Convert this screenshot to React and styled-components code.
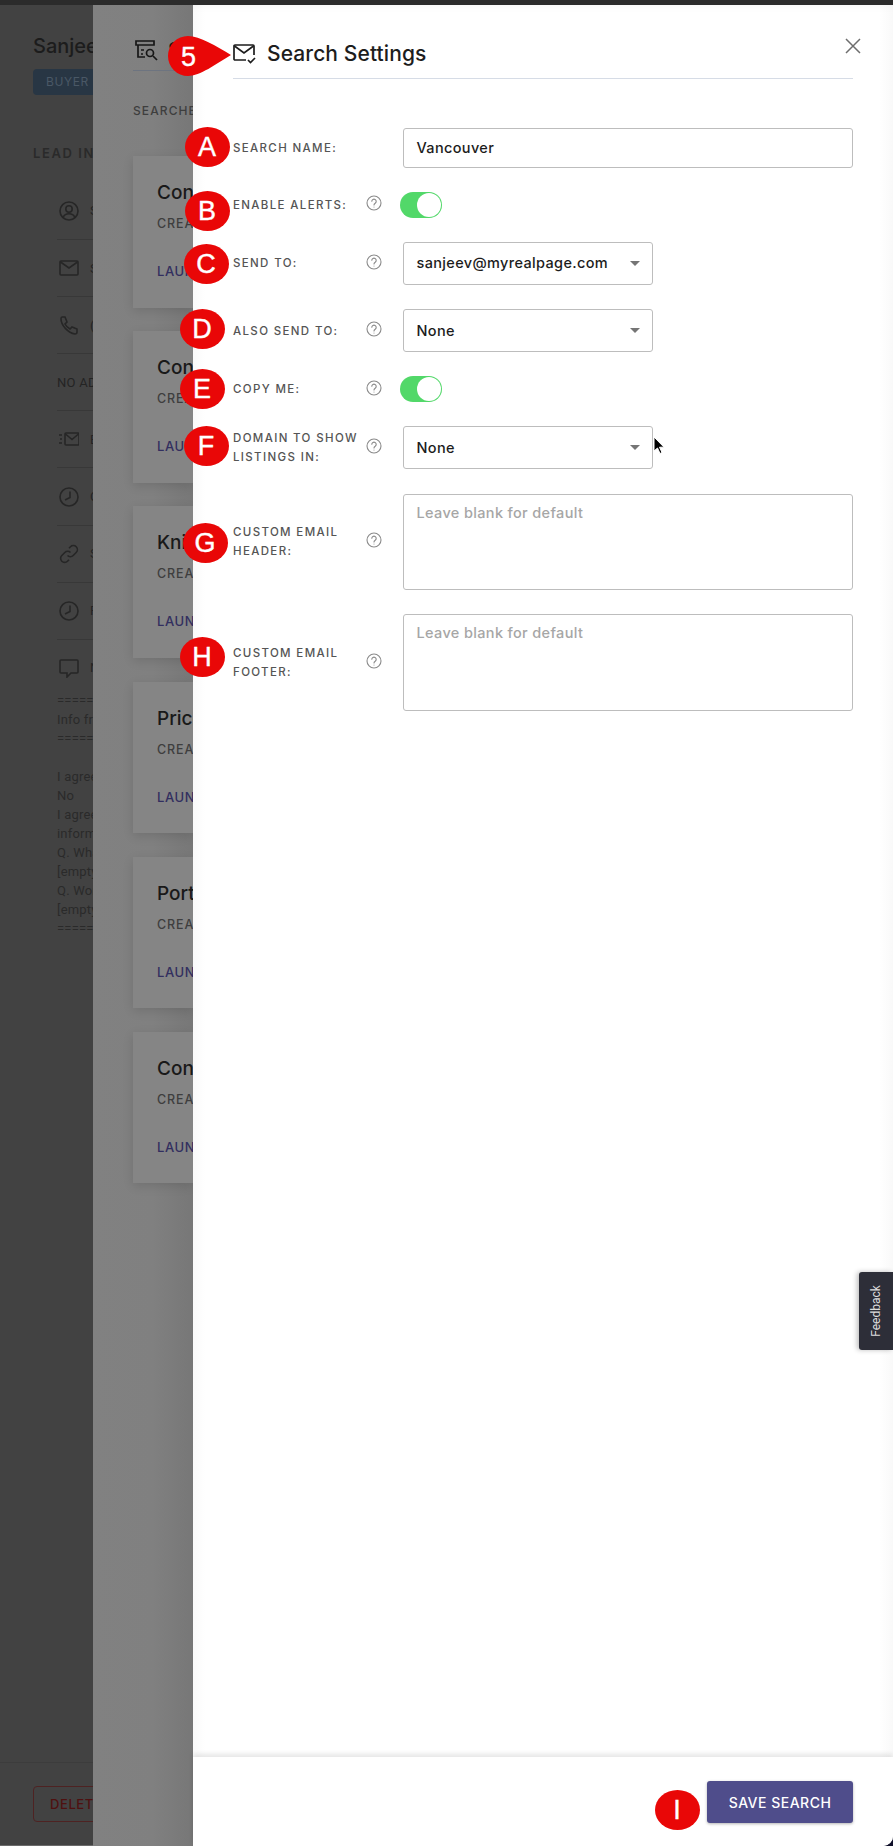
import styled, { createGlobalStyle } from "styled-components";

const GlobalStyle = createGlobalStyle`
  html, body {
    margin: 0;
    padding: 0;
    background: #10102a;
  }
  * {
    box-sizing: border-box;
  }
`;

const Page = styled.div`
  position: relative;
  width: 893px;
  height: 1846px;
  overflow: hidden;
  display: flex;
  flex-flow: column nowrap;
  background: #10102a;
  font-family: Inter, "Liberation Sans", sans-serif;
`;

const TopBar = styled.div`
  flex: 0 0 5px;
  background: #2b2b2b;
`;

const Stack = styled.div`
  flex: 1;
  display: flex;
  min-height: 0;
`;

/* dimmed lead page behind the drawers */
const LeadColumn = styled.section`
  flex: 0 0 93px;
  overflow: hidden;
  background: #424242;
  border-bottom: 1px solid #6a6a6a;
  display: flex;
  flex-flow: column nowrap;
  color: #1c1c1c;
  white-space: nowrap;
`;

const LeadName = styled.div`
  margin: 29px 0 0 33px;
  font-size: 20px;
  line-height: 24px;
  font-weight: 500;
`;

const LeadTag = styled.div`
  margin: 11px 0 0 33px;
  width: 80px;
  height: 26px;
  padding-left: 13px;
  border-radius: 4px;
  background: #283644;
  color: #4a5866;
  font-size: 12px;
  line-height: 26px;
  letter-spacing: 0.6px;
`;

const LeadHeading = styled.div`
  margin: 50px 0 0 33px;
  font-size: 13px;
  line-height: 16px;
  font-weight: 600;
  letter-spacing: 1.6px;
  color: #2a2a2a;
`;

const LeadRows = styled.div`
  margin: 21px 0 0 57px;
  display: flex;
  flex-flow: column nowrap;
`;

const LeadRow = styled.div`
  height: 57.1px;
  display: flex;
  align-items: center;
  gap: 11px;
  border-top: ${({ $first }) => ($first ? "none" : "1px solid #383838")};
  font-family: Roboto, "Liberation Sans", sans-serif;
  font-size: 13px;
  letter-spacing: 0.3px;
  color: #242424;

  svg {
    flex: none;
    margin-left: 2px;
  }
`;

const LeadNotes = styled.div`
  margin: -5px 0 0 57px;
  font-family: Roboto, "Liberation Sans", sans-serif;
  font-size: 13px;
  line-height: 19px;
  letter-spacing: 0.2px;
  color: #2a2a2a;
`;

const LeadFooter = styled.div`
  margin-top: auto;
  height: 83px;
  border-top: 1px solid #3c3c3c;
  padding: 23px 0 0 33px;
`;

const DeleteButton = styled.div`
  width: 90px;
  height: 36px;
  padding-left: 16px;
  border: 1px solid #4e2222;
  border-radius: 4px;
  color: #4f1010;
  font-size: 13px;
  line-height: 34px;
  font-weight: 500;
  letter-spacing: 0.6px;
`;

/* saved searches drawer */
const SearchesColumn = styled.section`
  flex: 0 0 100px;
  overflow: hidden;
  background: linear-gradient(90deg, #818181 0%, #808080 60%, #777 100%);
  padding: 0 0 0 40px;
  white-space: nowrap;
`;

const SearchesHeader = styled.div`
  height: 66px;
  padding-top: 33px;
  border-bottom: 1px solid #6d7480;
  display: flex;
  gap: 9px;
  color: #161616;
  font-size: 20px;
  line-height: 24px;
  font-weight: 500;

  svg {
    margin: 1px 0 0 2px;
  }
`;

const SearchesCaption = styled.div`
  margin-top: 32px;
  font-size: 12px;
  line-height: 16px;
  font-weight: 500;
  letter-spacing: 1.1px;
  color: #3e3e3e;
`;

const CardList = styled.div`
  margin-top: 37px;
  display: flex;
  flex-flow: column nowrap;
  gap: 23.7px;
`;

const Card = styled.article`
  height: 151.5px;
  padding: 25px 0 0 24px;
  background: #858585;
  box-shadow: 0 3px 10px rgba(0, 0, 0, 0.12);
`;

const CardTitle = styled.div`
  font-size: 19px;
  line-height: 24px;
  font-weight: 500;
  color: #191919;
`;

const CardMeta = styled.div`
  margin-top: 11px;
  font-size: 12.5px;
  line-height: 16px;
  font-weight: 500;
  letter-spacing: 0.9px;
  color: #3e3e3e;
`;

const CardLink = styled.div`
  margin-top: 31px;
  font-size: 13px;
  line-height: 16px;
  font-weight: 500;
  letter-spacing: 0.6px;
  color: #322e5f;
`;

/* the front drawer */
const Panel = styled.section`
  flex: 1;
  display: flex;
  flex-flow: column nowrap;
  background: linear-gradient(90deg, #fafafa 0, #fff 12px, #fff 98%, #f9f9f9 100%);
  border-bottom-right-radius: 10px;
  box-shadow: inset 0 10px 10px -10px rgba(0, 0, 0, 0.06);
`;

const PanelHeader = styled.header`
  margin: 0 40px;
  height: 74px;
  padding-top: 36px;
  border-bottom: 1px solid #d6dce6;
  display: flex;
  align-items: flex-start;
  justify-content: space-between;
`;

const PanelTitle = styled.h1`
  margin: 0;
  display: flex;
  align-items: center;
  gap: 10px;
  font-size: 21px;
  line-height: 26px;
  font-weight: 500;
  letter-spacing: 0.1px;
  color: #1d1d1d;
`;

const CloseButton = styled.button`
  margin: -4px -9px 0 0;
  padding: 0;
  width: 18px;
  height: 18px;
  border: 0;
  background: none;
  color: #6e6e6e;
`;

const Form = styled.form`
  flex: 1;
  margin: 49px 40px 0;
  display: flex;
  flex-flow: column nowrap;
  gap: 24.2px;
`;

const Row = styled.div`
  display: grid;
  grid-template-columns: 132px 18px 1fr;
  align-items: center;
`;

const Label = styled.label`
  grid-column: 1;
  padding-top: 1px;
  font-size: 11.5px;
  line-height: 19px;
  font-weight: 500;
  letter-spacing: 1.35px;
  text-transform: uppercase;
  color: #555;
`;

const Help = styled.span`
  grid-column: 2;
  display: flex;
  justify-content: center;
  margin-top: -3px;
  color: #8a8a8a;
`;

const Control = styled.div`
  grid-column: 3;
  padding-left: 20px;
`;

const TextField = styled.div`
  height: ${({ $height }) => $height}px;
  padding: ${({ $multi }) => ($multi ? "7px 12.5px" : "0 12.5px")};
  display: flex;
  align-items: ${({ $multi }) => ($multi ? "flex-start" : "center")};
  border: 1px solid #bdbdbd;
  border-radius: 3px;
  background: #fff;
  font-size: 14.5px;
  line-height: 22px;
  font-weight: 500;
  letter-spacing: 0.35px;
  color: ${({ $placeholder }) => ($placeholder ? "#a6a6a6" : "#1c1c1c")};
`;

const SelectField = styled(TextField)`
  width: 250px;
  justify-content: space-between;
  padding-right: 12px;

  &::after {
    content: "";
    border-left: 5px solid transparent;
    border-right: 5px solid transparent;
    border-top: 5px solid #757575;
  }
`;

const Toggle = styled.div`
  position: relative;
  width: 42px;
  height: 26px;
  margin-left: -3px;
  border-radius: 13px;
  background: #52d869;

  &::after {
    content: "";
    position: absolute;
    top: 1px;
    right: 1px;
    width: 24px;
    height: 24px;
    border-radius: 50%;
    background: #fff;
  }
`;

const PanelFooter = styled.footer`
  flex: 0 0 89px;
  padding: 24px 40px 0 0;
  display: flex;
  justify-content: flex-end;
  background: #fff;
  border-bottom-right-radius: 10px;
  box-shadow: 0 -3px 5px rgba(0, 0, 0, 0.1);
`;

const SaveButton = styled.button`
  width: 146px;
  height: 42px;
  border: 0;
  border-radius: 3px;
  background: #4f4d8b;
  box-shadow: 0 1px 3px rgba(0, 0, 0, 0.3);
  color: #fff;
  font-family: inherit;
  font-size: 14px;
  font-weight: 500;
  letter-spacing: 0.5px;
`;

/* things lying over the page */
const Callout = styled.div`
  position: absolute;
  left: ${({ $x }) => $x - 22.5}px;
  top: ${({ $y }) => $y - 20}px;
  width: 45px;
  height: 40px;
  border-radius: 50%;
  background: #e90707;
  color: #fff;
  font-family: "Liberation Sans", Arial, sans-serif;
  font-size: 27px;
  line-height: 40px;
  text-align: center;
  -webkit-text-stroke: 0.4px #fff;
`;

const StepCallout = styled.div`
  position: absolute;
  left: 168px;
  top: 36px;
  width: 63px;
  height: 40px;
  color: #fff;
  font-family: "Liberation Sans", Arial, sans-serif;
  font-size: 27px;
  line-height: 40px;
  -webkit-text-stroke: 0.4px #fff;

  svg {
    position: absolute;
    inset: 0;
  }

  span {
    position: absolute;
    left: 13px;
    top: 1px;
  }
`;

const FeedbackTab = styled.div`
  position: absolute;
  left: 859px;
  top: 1272px;
  width: 34px;
  height: 78px;
  border-radius: 3px 0 0 3px;
  background: #2d2e38;
  box-shadow: -2px 0 5px rgba(0, 0, 0, 0.25);
  display: flex;
  align-items: center;
  justify-content: center;
  color: #dcdcdc;
  font-family: Roboto, "Liberation Sans", sans-serif;
  font-size: 12px;

  span {
    transform: rotate(-90deg);
  }
`;

const Pointer = styled.svg`
  position: absolute;
  left: 651px;
  top: 436px;
`;

const HelpIcon = () => (
  <svg width="16" height="16" viewBox="0 0 16 16" fill="none" stroke="currentColor" strokeWidth="1.1">
    <circle cx="8" cy="8" r="7" />
    <path d="M5.8 6.3a2.2 2.2 0 1 1 3.4 1.9c-.8.5-1.2.9-1.2 1.8" strokeLinecap="round" />
    <circle cx="8" cy="12" r=".5" fill="currentColor" stroke="none" />
  </svg>
);

const leadIcons = {
  user: (
    <>
      <circle cx="10" cy="10" r="9" />
      <circle cx="10" cy="8" r="3.2" />
      <path d="M4.2 16.2c1-2.4 3.2-3.4 5.8-3.4s4.8 1 5.8 3.4" />
    </>
  ),
  mail: (
    <>
      <rect x="1" y="3" width="18" height="14" rx="1" />
      <path d="M1.5 4l8.5 6 8.5-6" />
    </>
  ),
  phone: <path d="M3 2h3l2 5-2 2c1 2 3 4 5 5l2-2 5 2v3c0 1-1 2-2 2C9 18 2 10 2 4c0-1 0-2 1-2z" />,
  list: (
    <>
      <rect x="6" y="4" width="14" height="12" rx="1" />
      <path d="M6.5 5l6.5 5.5 6.5-5.5M0 6h3M1 10h2M0 14h3" />
    </>
  ),
  clock: (
    <>
      <circle cx="10" cy="10" r="9" />
      <path d="M11 4.5v6L6 13" />
    </>
  ),
  link: (
    <>
      <path d="M8.5 11.5a4 4 0 0 0 5.7 0l3-3a4 4 0 0 0-5.7-5.7l-1.5 1.5" />
      <path d="M11.5 8.5a4 4 0 0 0-5.7 0l-3 3a4 4 0 0 0 5.7 5.7l1.5-1.5" />
    </>
  ),
  comment: <path d="M2 2h16a1 1 0 0 1 1 1v11a1 1 0 0 1-1 1h-6l-4 4v-4H2a1 1 0 0 1-1-1V3a1 1 0 0 1 1-1z" />,
};

const LeadIcon = ({ name }) => (
  <svg width="20" height="20" viewBox="0 0 20 20" fill="none" stroke="#262626" strokeWidth="1.6">
    {leadIcons[name]}
  </svg>
);

const leadRows = [
  { icon: "user", text: "S" },
  { icon: "mail", text: "S" },
  { icon: "phone", text: "(" },
  { text: "NO AD" },
  { icon: "list", text: "E" },
  { icon: "clock", text: "C" },
  { icon: "link", text: "S" },
  { icon: "clock", text: "F" },
  { icon: "comment", text: "N" },
];

const noteLines = ["=====", "Info fr", "=====", "\u00a0", "I agree", "No", "I agree", "inform", "Q. Wha", "[empty", "Q. Wor", "[empty", "====="];

const searches = ["Cond", "Cond", "Knig", "Price", "Port", "Cond"];

const fields = [
  { label: "Search name:", kind: "text", value: "Vancouver", height: 39.5, noHelp: true },
  { label: "Enable alerts:", kind: "toggle" },
  { label: "Send to:", kind: "select", value: "sanjeev@myrealpage.com" },
  { label: "Also send to:", kind: "select", value: "None" },
  { label: "Copy me:", kind: "toggle" },
  { label: "Domain to show listings in:", kind: "select", value: "None" },
  { label: "Custom email header:", kind: "area", height: 96 },
  { label: "Custom email footer:", kind: "area", height: 97 },
];

const callouts = [
  { text: "A", x: 207, y: 147 },
  { text: "B", x: 207, y: 211 },
  { text: "C", x: 206, y: 264 },
  { text: "D", x: 202, y: 329 },
  { text: "E", x: 202, y: 389 },
  { text: "F", x: 206, y: 446 },
  { text: "G", x: 205, y: 543 },
  { text: "H", x: 202, y: 657 },
  { text: "I", x: 677, y: 1810 },
];

const renderControl = ({ kind, value, height }) => {
  if (kind === "toggle") return <Toggle />;
  if (kind === "select") return <SelectField $height={43}>{value}</SelectField>;
  if (kind === "area")
    return (
      <TextField $height={height} $multi $placeholder>
        Leave blank for default
      </TextField>
    );
  return <TextField $height={height}>{value}</TextField>;
};

export default function App() {
  return (
    <Page>
      <GlobalStyle />
      <TopBar />
      <Stack>
        <LeadColumn>
          <LeadName>Sanjeev</LeadName>
          <LeadTag>BUYER</LeadTag>
          <LeadHeading>LEAD INFO</LeadHeading>
          <LeadRows>
            {leadRows.map(({ icon, text }, i) => (
              <LeadRow key={i} $first={i === 0}>
                {icon && <LeadIcon name={icon} />}
                {text}
              </LeadRow>
            ))}
          </LeadRows>
          <LeadNotes>
            {noteLines.map((line, i) => (
              <div key={i}>{line}</div>
            ))}
          </LeadNotes>
          <LeadFooter>
            <DeleteButton>DELETE</DeleteButton>
          </LeadFooter>
        </LeadColumn>

        <SearchesColumn>
          <SearchesHeader>
            <svg width="24" height="22" viewBox="0 0 24 22" fill="none" stroke="#161616" strokeWidth="1.7">
              <path d="M1 2h18v4H1zM3 6v12h7M6 11h3M6 15h2" />
              <circle cx="15" cy="14" r="3.5" />
              <path d="M18 17l4 4" />
            </svg>
            S
          </SearchesHeader>
          <SearchesCaption>SEARCHES</SearchesCaption>
          <CardList>
            {searches.map((title, i) => (
              <Card key={i}>
                <CardTitle>{title}</CardTitle>
                <CardMeta>CREAT</CardMeta>
                <CardLink>LAUNC</CardLink>
              </Card>
            ))}
          </CardList>
        </SearchesColumn>

        <Panel>
          <PanelHeader>
            <PanelTitle>
              <svg width="24" height="20" viewBox="0 0 24 20" fill="none" stroke="#1d1d1d" strokeWidth="1.7">
                <path d="M13 16H2a1 1 0 0 1-1-1V2a1 1 0 0 1 1-1h18a1 1 0 0 1 1 1v9" />
                <path d="M1.5 2l9.5 7 9.5-7" />
                <path d="M15 16l2.5 2.5L22 14" />
              </svg>
              Search Settings
            </PanelTitle>
            <CloseButton type="button" aria-label="Close">
              <svg width="18" height="18" viewBox="0 0 18 18" stroke="currentColor" strokeWidth="1.5">
                <path d="M2 2l14 14M16 2L2 16" />
              </svg>
            </CloseButton>
          </PanelHeader>

          <Form>
            {fields.map((field) => (
              <Row key={field.label}>
                <Label>{field.label}</Label>
                {!field.noHelp && (
                  <Help>
                    <HelpIcon />
                  </Help>
                )}
                <Control>{renderControl(field)}</Control>
              </Row>
            ))}
          </Form>

          <PanelFooter>
            <SaveButton type="button">SAVE SEARCH</SaveButton>
          </PanelFooter>
        </Panel>
      </Stack>

      <StepCallout>
        <svg width="63" height="40" viewBox="0 0 63 40">
          <path d="M20 0c12 0 28 10 43 19C48 28 32 40 20 40A20 20 0 0 1 20 0z" fill="#e90707" />
        </svg>
        <span>5</span>
      </StepCallout>
      {callouts.map(({ text, x, y }) => (
        <Callout key={text} $x={x} $y={y}>
          {text}
        </Callout>
      ))}
      <FeedbackTab>
        <span>Feedback</span>
      </FeedbackTab>
      <Pointer width="14" height="20" viewBox="0 0 14 20">
        <path d="M3 1v14l3.500-3 2.500 5.500 2-1-2.500-5.300H13z" fill="#000" stroke="#fff" strokeWidth="1" />
      </Pointer>
    </Page>
  );
}
